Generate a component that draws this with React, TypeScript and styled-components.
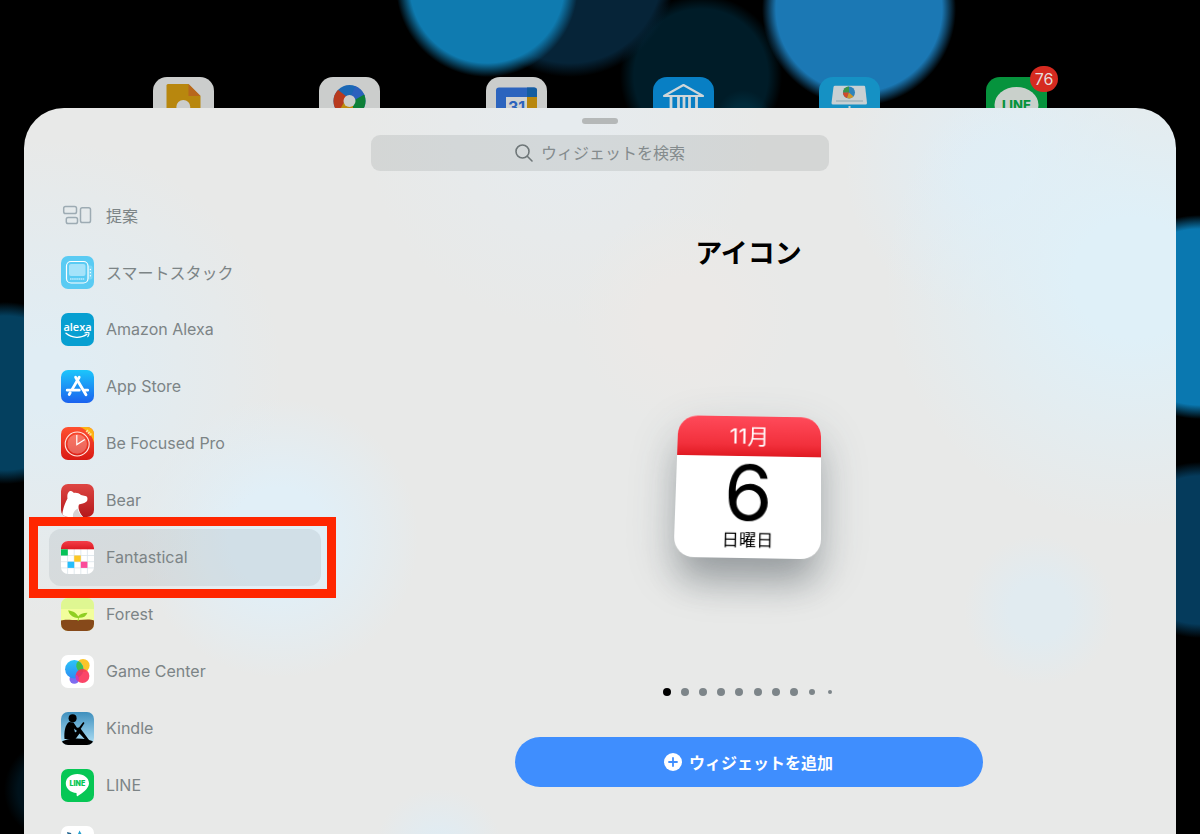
import React from "react";
import styled, { createGlobalStyle } from "styled-components";

const GlobalStyle = createGlobalStyle`
  *, *::before, *::after { box-sizing: border-box; }
  body {
    margin: 0;
    background: #000;
    font-family: Inter, "Noto Sans CJK JP", sans-serif;
    font-size: 16px;
  }
  button, input { font: inherit; }
`;

const glow = (x: string, y: string, r: number, color: string) =>
  `radial-gradient(circle at ${x} ${y}, ${color} ${r - 9}px, transparent ${r + 5}px)`;

const HomeScreen = styled.div`
  display: flex;
  flex-direction: column;
  height: 100vh;
  overflow: hidden;
  padding-top: 77px;
  background:
    ${glow("859px", "9px", 92, "#1b78b4")},
    ${glow("487px", "-14px", 86, "#0f7bb0")},
    ${glow("570px", "-29px", 101, "#062438")},
    ${glow("743px", "117px", 22, "#002a3a")},
    ${glow("701px", "76px", 76, "#001c28")},
    ${glow("100%", "317px", 97, "#0a78b0")},
    ${glow("100%", "550px", 83, "#053b5c")},
    ${glow("5px", "393px", 86, "#04405f")},
    ${glow("54px", "790px", 45, "#00121b")},
    #000;
`;

const Dock = styled.div`
  display: grid;
  grid-template-columns: repeat(6, 1fr);
  justify-items: center;
  padding: 0 100px;
`;

const HomeApp = styled.div`
  position: relative;
  width: 61px;
  height: 61px;
  svg { display: block; border-radius: 14px; }
`;

const Badge = styled.span`
  position: absolute;
  top: -11px;
  right: -11px;
  width: 28px;
  height: 26px;
  border-radius: 13px;
  background: #d62a20;
  color: #e6dcdc;
  font-size: 16px;
  line-height: 26px;
  text-align: center;
`;

const Sheet = styled.main`
  position: relative;
  flex: 1;
  display: flex;
  flex-direction: column;
  min-height: 0;
  overflow: hidden;
  margin: -30px 24px 0;
  padding-top: 10px;
  border-radius: 40px 40px 0 0;
  background:
    radial-gradient(circle at 1110px 170px, #dff0f8 60px, transparent 250px),
    radial-gradient(circle at 970px 60px, #e1edf4 30px, transparent 150px),
    radial-gradient(circle at 20px 270px, #e0edf4 30px, transparent 240px),
    radial-gradient(circle at 255px 430px, #e1eff7 50px, transparent 140px),
    radial-gradient(circle at 1015px 502px, #e1ebf0 30px, transparent 75px),
    radial-gradient(circle at 415px 745px, #e0ecf3 15px, transparent 65px),
    radial-gradient(circle at 660px 210px, #ebe9e7 40px, transparent 110px),
    radial-gradient(circle at 540px 20px, #e6ebee 20px, transparent 200px),
    #e8e9e8;
`;

const Grabber = styled.div`
  align-self: center;
  width: 36px;
  height: 6px;
  border-radius: 3px;
  background: #b5b8b8;
`;

const SearchField = styled.label`
  align-self: center;
  display: flex;
  align-items: center;
  justify-content: center;
  gap: 8px;
  width: 458px;
  max-width: 90%;
  height: 36px;
  margin-top: 11px;
  border-radius: 9px;
  background: rgba(150, 156, 154, 0.24);
  color: #6f7779;
`;

const SearchInput = styled.input`
  width: 144px;
  padding: 0;
  border: 0;
  outline: 0;
  background: transparent;
  color: #333;
  &::placeholder { color: #848b8d; opacity: 1; }
`;

const Columns = styled.div`
  display: flex;
  flex: 1;
  min-height: 0;
  margin-top: 16px;
`;

const AppList = styled.ul`
  flex: none;
  width: 297px;
  margin: 0;
  padding: 0 0 0 25px;
  list-style: none;
`;

const AppRow = styled.li`
  position: relative;
  height: 57px;
`;

const AppButton = styled.button<{ $selected?: boolean }>`
  display: flex;
  align-items: center;
  gap: 12px;
  width: 100%;
  height: 100%;
  padding: 0 12px;
  border: 0;
  border-radius: 12px;
  background: ${(p) => (p.$selected ? "rgba(130, 140, 150, 0.16)" : "transparent")};
  color: #7c8486;
  text-align: left;
  svg { display: block; flex: none; border-radius: 7px; }
`;

const AppName = styled.span`
  padding-bottom: 2px;
`;

const Highlight = styled.div`
  position: absolute;
  z-index: 1;
  inset: -12px -15px -12px -20px;
  border: 9px solid #ff2600;
  pointer-events: none;
`;

const Preview = styled.section`
  flex: 1;
  display: flex;
  flex-direction: column;
  align-items: center;
  padding-top: 47px;
`;

const Title = styled.h1`
  margin: 0;
  font-size: 27px;
  font-weight: 700;
  line-height: 40px;
  color: #000;
`;

const CalendarWidget = styled.div`
  display: flex;
  flex-direction: column;
  flex: none;
  width: 145px;
  height: 146px;
  margin-top: 139px;
  overflow: hidden;
  border-radius: 20px;
  background: #fff;
  color: #000;
  text-align: center;
  transform: perspective(1000px) rotateX(14deg) rotate(1deg);
  box-shadow: 0 28px 34px -6px rgba(60, 70, 74, 0.36), 0 16px 50px rgba(60, 75, 85, 0.2);
`;

const Month = styled.div`
  height: 42px;
  background: linear-gradient(#ff4a5a, #f2303c 70%, #e01a22);
  color: #fff;
  font-size: 22px;
  line-height: 42px;
`;

const Day = styled.div`
  font-size: 78px;
  line-height: 76px;
`;

const Weekday = styled.div`
  font-size: 17px;
  line-height: 20px;
`;

const Pages = styled.div`
  display: flex;
  justify-content: space-between;
  width: 172px;
  height: 8px;
  margin-top: 129px;
`;

const PageButton = styled.button<{ $size: number; $current?: boolean }>`
  display: grid;
  place-items: center;
  width: 8px;
  height: 8px;
  padding: 0;
  border: 0;
  background: none;
  &::before {
    content: "";
    width: ${(p) => p.$size}px;
    height: ${(p) => p.$size}px;
    border-radius: 50%;
    background: ${(p) => (p.$current ? "#000" : "#7d8589")};
  }
`;

const AddButton = styled.button`
  display: flex;
  align-items: center;
  justify-content: center;
  gap: 7px;
  flex: none;
  width: 468px;
  max-width: 90%;
  height: 50px;
  margin-top: 41px;
  padding: 0;
  border: 0;
  border-radius: 25px;
  background: #3f8efe;
  color: #fff;
  font-weight: 700;
`;

const HomeIcon = ({ bg, children }: { bg: string; children: React.ReactNode }) => (
  <svg width="61" height="61" viewBox="0 0 61 61" aria-hidden="true">
    <rect width="61" height="61" fill={bg} />
    {children}
  </svg>
);

const homeIcons = [
  <HomeIcon bg="#cbcdcc">
    <path d="M15 7H35.5L47.5 19V55H13.500V8.500Q13.500 7 15 7Z" fill="#b8870e" />
    <path d="M35.500 7L47.500 19H35.500Z" fill="#b8671c" />
    <circle cx="30.300" cy="30" r="7" fill="#cbcdcc" />
  </HomeIcon>,
  <HomeIcon bg="#cbcdcc">
    <clipPath id="ring"><circle cx="30.500" cy="24" r="16" /></clipPath>
    <g clipPath="url(#ring)">
      <rect x="14" y="7" width="34" height="34" fill="#1b68b5" />
      <path d="M30 24L38 5H52V17Z" fill="#2b61bd" />
      <path d="M34 24L46 17L50 17V42H30Z" fill="#0d7f37" />
      <path d="M26 24L10 42H34V24Z" fill="#bd8b0d" />
      <path d="M28 20L18 12L10 14V36L20 34Z" fill="#b83a1e" />
    </g>
    <circle cx="30.500" cy="24" r="6" fill="#cbcdcc" />
  </HomeIcon>,
  <HomeIcon bg="#cbcdcc">
    <path d="M13 10.500H48Q51 10.500 51 13.500V52H10V13.500Q10 10.500 13 10.500Z" fill="#2c64be" />
    <path d="M41 10.500H48Q51 10.500 51 13.500V20H41Z" fill="#145da0" />
    <rect x="41" y="20" width="10" height="30" fill="#b8870e" />
    <rect x="20" y="20" width="21" height="30" fill="#d0d2d1" />
    <text x="30.500" y="36" fontSize="16" fontWeight="700" textAnchor="middle" fill="#2c64be">31</text>
  </HomeIcon>,
  <HomeIcon bg="#087fc4">
    <path d="M11 19L30.500 8L50 19Z" fill="none" stroke="#cfd6d9" strokeWidth="2.200" strokeLinejoin="round" />
    <path d="M18 20V50M25.500 20V50M31 20V50M36.500 20V50M43.500 20V50" stroke="#cfd6d9" strokeWidth="2.800" />
  </HomeIcon>,
  <HomeIcon bg="#1591c4">
    <path d="M16 8.700H45Q46 8.700 46.200 10L48 26Q48 27.500 46.500 27.500H14Q12.500 27.500 12.500 26L14.500 10Q14.700 8.700 16 8.700Z" fill="#c8d0d3" />
    <circle cx="30" cy="15.500" r="6" fill="#2d83bb" />
    <path d="M30 15.500V9.500A6 6 0 0 0 24 15.500Z" fill="#3b9549" />
    <path d="M30 15.500H24A6 6 0 0 0 28 21Z" fill="#d14a2a" />
    <path d="M30 15.500L28 21A6 6 0 0 0 34.500 19.500Z" fill="#cf972a" />
    <path d="M17 24H44" stroke="#8fa5ad" strokeWidth="1.200" />
    <path d="M30.500 29V50" stroke="#c8d0d3" strokeWidth="2" />
  </HomeIcon>,
  <HomeIcon bg="#06933d">
    <ellipse cx="30.500" cy="28" rx="22" ry="18" fill="#c9d0cb" />
    <text x="30.500" y="33" fontSize="13" fontWeight="800" textAnchor="middle" fill="#06933d">LINE</text>
  </HomeIcon>,
];

const Tile = ({ children }: { children: React.ReactNode }) => (
  <svg width="33" height="33" viewBox="0 0 33 33" aria-hidden="true">
    {children}
  </svg>
);

const Gradient = ({ id, from, to }: { id: string; from: string; to: string }) => (
  <linearGradient id={id} x1="0" y1="0" x2="0" y2="1">
    <stop offset="0" stopColor={from} />
    <stop offset="1" stopColor={to} />
  </linearGradient>
);

const SuggestionIcon = () => (
  <Tile>
    <g fill="none" stroke="#9dabb3" strokeWidth="1.500">
      <rect x="2.700" y="7.500" width="12.800" height="7" rx="1.800" />
      <rect x="5.300" y="18.500" width="11.200" height="6" rx="1.800" />
      <rect x="19.500" y="8.700" width="10" height="14.800" rx="1.800" />
    </g>
  </Tile>
);

const SmartStackIcon = () => (
  <Tile>
    <rect width="33" height="33" fill="#5acbf3" />
    <rect x="26" y="9.500" width="5.500" height="14" rx="2" fill="#7ad7f7" />
    <rect x="5.500" y="5.500" width="21.500" height="21.500" rx="4.500" fill="#5acbf3" stroke="#fff" strokeWidth="1.200" />
    <rect x="8" y="8" width="16.500" height="12" rx="2" fill="#a5e3fa" />
    <path d="M9 23H23.500" stroke="#a5e3fa" strokeWidth="2.200" strokeDasharray="1.600 .5" />
    <g fill="#fff"><circle cx="29.400" cy="13.500" r=".7" /><circle cx="29.400" cy="16.600" r=".7" /><circle cx="29.400" cy="19.800" r=".7" /></g>
  </Tile>
);

const AlexaIcon = () => (
  <Tile>
    <rect width="33" height="33" fill="#079fd1" />
    <text x="16.500" y="18" fontFamily="Open Sans" fontSize="11" fontWeight="600" textAnchor="middle" fill="#fff">alexa</text>
    <path d="M5 20.300C11 25.500 20 25.500 26 21.300" fill="none" stroke="#fff" strokeWidth="1.400" strokeLinecap="round" />
    <path d="M23.500 20C25.500 19.300 27 19.300 28 19.800C28.200 21.500 27.600 23 26.500 24" fill="none" stroke="#fff" strokeWidth="1.200" />
  </Tile>
);

const AppStoreIcon = () => (
  <Tile>
    <Gradient id="store" from="#1cc6fb" to="#1b62ef" />
    <rect width="33" height="33" fill="url(#store)" />
    <g stroke="#fff" strokeWidth="2.800" strokeLinecap="round" fill="none">
      <path d="M18.200 7.300L11 19.600M9.200 22.700L8.200 24.500" />
      <path d="M14.600 7.300L25 24.800" />
      <path d="M6.200 20.200H18.300M23.500 20.200H26.700" />
    </g>
  </Tile>
);

const FocusIcon = () => (
  <Tile>
    <Gradient id="focus" from="#ff5030" to="#d91a14" />
    <rect width="33" height="33" fill="url(#focus)" />
    <path d="M18.500 0H33V15.500C31 8 26 2.500 18.500 0Z" fill="#fdb414" />
    <path d="M25.500 3.500L30.500 8.500" stroke="#ffe39a" strokeWidth="2.600" strokeDasharray="1.600 .8" />
    <circle cx="16.200" cy="17" r="9.800" fill="#fff" opacity=".28" />
    <circle cx="16.200" cy="17" r="12" fill="none" stroke="#ffe9e4" strokeWidth="1.100" />
    <path d="M15.800 8V17.600L23.800 12.600" fill="none" stroke="#fff" strokeWidth="1.200" />
  </Tile>
);

const BearIcon = () => (
  <Tile>
    <Gradient id="bear" from="#de4643" to="#b4181b" />
    <rect width="33" height="33" fill="url(#bear)" />
    <path d="M1 33C1.500 25 4 19 6.500 14.500C6 11.500 6.500 8.500 8.500 7.200C10.500 6.300 12 7.500 12.800 9C15.500 8.500 18 9.200 20 11L25.300 12.300C26.800 13.300 26.800 16 25.600 17.500C23.500 19.800 20 19.500 18 20.500C16.500 24 18.500 29 22 33Z" fill="#fff" />
    <path d="M12 33C11.500 30 13 26.500 16.800 24.500C17 27.500 19 30.500 22 33Z" fill="#d7d2d2" />
  </Tile>
);

const FantasticalIcon = () => (
  <Tile>
    <Gradient id="fan" from="#f43e49" to="#dc1a22" />
    <rect width="33" height="33" fill="#fff" />
    <path d="M6.600 8V33M13.200 8V33M19.800 8V33M26.400 8V33M0 14.500H33M0 20.700H33M0 26.900H33" stroke="#d9e3ea" strokeWidth=".8" />
    <rect width="33" height="8.300" fill="url(#fan)" />
    <rect y="8.300" width="6.800" height="6.200" fill="#06c258" />
    <rect x="13.200" y="14.500" width="6.600" height="6.200" fill="#fcc727" />
    <rect x="6.600" y="20.700" width="6.600" height="6.200" fill="#25bdfb" />
    <rect x="19.800" y="20.700" width="6.600" height="6.200" fill="#fb4a99" />
  </Tile>
);

const ForestIcon = () => (
  <Tile>
    <rect width="33" height="33" fill="#f2fe9c" />
    <rect width="33" height="11" fill="#dff792" />
    <path d="M0 22.500C4 20.800 12 22.200 17 22C23 21.800 29 20.800 33 22.500V33H0Z" fill="#86491a" />
    <path d="M17 20C11.500 19.500 8 16.500 7.200 12.200C12.500 13 16 15.500 17.200 18.500C19 15.800 22 14.800 26.500 14.700C25 18.500 22 20 17.800 19.800L17.600 23H16.600Z" fill="#90cf22" />
  </Tile>
);

const GameCenterIcon = () => (
  <Tile>
    <Gradient id="game" from="#2cc4f6" to="#2d8cf4" />
    <rect width="33" height="33" fill="#fff" />
    <circle cx="13.300" cy="24" r="4.800" fill="#7d6cf0" />
    <circle cx="22" cy="10.500" r="6.600" fill="#fcc52b" />
    <circle cx="13.300" cy="14.300" r="9.200" fill="url(#game)" />
    <path d="M15.800 8A6.600 6.600 0 0 0 21.800 17.100A9.200 9.200 0 0 0 17.800 6.200Q16.500 6.800 15.800 8Z" fill="#42c04c" />
    <circle cx="21.500" cy="21" r="6.900" fill="#fb3158" opacity=".9" />
    <path d="M14.700 22.300A6.900 6.900 0 0 0 17.300 26.500A4.800 4.800 0 0 0 14.700 19.500Z" fill="#d23bb0" />
  </Tile>
);

const KindleIcon = () => (
  <Tile>
    <Gradient id="sky" from="#3f8fbd" to="#b2e2f7" />
    <rect width="33" height="33" fill="url(#sky)" />
    <path d="M0 30C4 27.500 9 26.500 16 26.500C23 26.500 29 27.500 33 30V33H0Z" fill="#000" />
    <circle cx="11.600" cy="6.200" r="4" fill="#000" />
    <path d="M8 10C4 13 3 20 3.500 27H14.500L18.500 21.500L25 28.500L28 28L19.500 16.500L14 20.500L13 16.500L16 19L19.500 17.200L23.500 11L22.300 10L18 15.500L16 15.800L12.500 10.500Z" fill="#000" />
  </Tile>
);

const LineIcon = () => (
  <Tile>
    <rect width="33" height="33" fill="#06c755" />
    <path d="M16.300 5C22.800 5 28 9 28 14.300C28 19.500 21 24.500 16.500 27.300C15.600 27.800 15.600 25.500 15.500 24C9.500 23.800 4.800 19.500 4.800 14.300C4.800 9 9.800 5 16.300 5Z" fill="#fff" />
    <text x="16.400" y="17.300" fontSize="7" fontWeight="900" textAnchor="middle" fill="#06c755">LINE</text>
  </Tile>
);

const StarIcon = () => (
  <Tile>
    <rect width="33" height="33" fill="#fff" />
    <path d="M6 6L10 7L11 10H7Z" fill="#23648f" />
    <path d="M18.500 4.500L20.500 8L24 10H14L17 8Z" fill="#239fce" />
  </Tile>
);

const apps = [
  { name: "提案", Icon: SuggestionIcon },
  { name: "スマートスタック", Icon: SmartStackIcon },
  { name: "Amazon Alexa", Icon: AlexaIcon },
  { name: "App Store", Icon: AppStoreIcon },
  { name: "Be Focused Pro", Icon: FocusIcon },
  { name: "Bear", Icon: BearIcon },
  { name: "Fantastical", Icon: FantasticalIcon, selected: true },
  { name: "Forest", Icon: ForestIcon },
  { name: "Game Center", Icon: GameCenterIcon },
  { name: "Kindle", Icon: KindleIcon },
  { name: "LINE", Icon: LineIcon },
  { name: "", Icon: StarIcon },
];

const pageSizes = [8, 8, 8, 8, 8, 8, 8, 8, 6, 4];

export default function App() {
  return (
    <>
      <GlobalStyle />
      <HomeScreen>
        <Dock>
          {homeIcons.map((icon, i) => (
            <HomeApp key={i}>
              {icon}
              {i === homeIcons.length - 1 && <Badge>76</Badge>}
            </HomeApp>
          ))}
        </Dock>
        <Sheet>
          <Grabber />
          <SearchField>
            <svg width="18" height="18" viewBox="0 0 18 18" fill="none" stroke="currentColor" strokeWidth="1.600" strokeLinecap="round" aria-hidden="true">
              <circle cx="7.500" cy="7.500" r="6.500" />
              <path d="M12.300 12.300L17 17" />
            </svg>
            <SearchInput type="text" placeholder="ウィジェットを検索" />
          </SearchField>
          <Columns>
            <AppList>
              {apps.map(({ name, Icon, selected }) => (
                <AppRow key={name}>
                  <AppButton type="button" $selected={selected}>
                    <Icon />
                    <AppName>{name}</AppName>
                  </AppButton>
                  {selected && <Highlight />}
                </AppRow>
              ))}
            </AppList>
            <Preview>
              <Title>アイコン</Title>
              <CalendarWidget>
                <Month>11月</Month>
                <Day>6</Day>
                <Weekday>日曜日</Weekday>
              </CalendarWidget>
              <Pages>
                {pageSizes.map((size, i) => (
                  <PageButton key={i} type="button" $size={size} $current={i === 0} />
                ))}
              </Pages>
              <AddButton type="button">
                <svg width="18" height="18" viewBox="0 0 18 18" aria-hidden="true">
                  <circle cx="9" cy="9" r="9" fill="#fff" />
                  <path d="M9 5V13M5 9H13" stroke="#3f8efe" strokeWidth="1.800" strokeLinecap="round" />
                </svg>
                ウィジェットを追加
              </AddButton>
            </Preview>
          </Columns>
        </Sheet>
      </HomeScreen>
    </>
  );
}
